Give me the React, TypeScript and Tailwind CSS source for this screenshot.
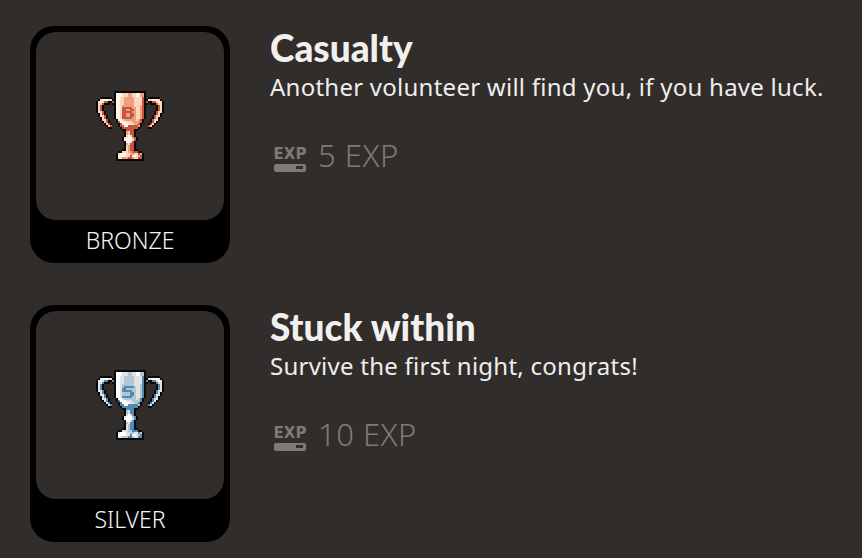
import React from 'react';

interface Achievement {
  tier: string;
  title: string;
  description: string;
  exp: number;
  palette: Record<string, string>;
  letter: string[];
}

const letterB = ['dddddo', 'ddoodd', 'dddddo', 'ddoodd', 'ddoodd', 'dddddo'];
const letterS = ['oddddd', 'ddoooo', 'dddddo', 'oooodd', 'oooodd', 'dddddo'];

const achievements: Achievement[] = [
  {
    tier: 'BRONZE',
    title: 'Casualty',
    description: 'Another volunteer will find you, if you have luck.',
    exp: 5,
    palette: { k: '#0b0908', d: '#c9553f', o: '#ee9f7f', p: '#fbd6ba', w: '#fff6ee' },
    letter: letterB,
  },
  {
    tier: 'SILVER',
    title: 'Stuck within',
    description: 'Survive the first night, congrats!',
    exp: 10,
    palette: { k: '#0b0908', d: '#4e8bb3', o: '#b4c6d2', p: '#dfe3e6', w: '#ffffff' },
    letter: letterS,
  },
];

// left handle, 8 cells wide, mirrored onto the right side
const handle = [
  '........', '........', '........',
  '..kkkkkk', '.kpwwwpp', 'kpwpddkk', 'kppdkkk.', 'kpdk....', 'kpdk....',
  'kpdk....', 'kppdk...', '.kpdk...', '.kppdk..', '..kpdk..', '..kppdk.',
  '...kpdk.', '....kpdk', '.....kpd', '......kk',
];

const body = [
  '.kkkkkkkkkkkkkkkk.',
  '.kwwwpppooppwwook.',
  '.kwwwpppooppwwook.',
  '.kwwppoooooppppdk.',
  'kkwwppoooooppppdkk',
  'dkwwppoooooppppdkd',
  'kkwwppoooooppppdkk',
  '.kwwpoooooopppodk.',
  '.kwwp------oppodk.',
  '.kwwp------oppodk.',
  '.kwwp------oppodk.',
  '.kwwp------oppodk.',
  '.kwwp------oppodk.',
  '.kwwp------oppodk.',
  '..kwwpoooooopodk..',
  '..kdwwwpppoooodk..',
  '...kdwwwwppoodk...',
  '...kddwwdddddok...',
  '....kddddddddk....',
  '.....kkddddkk.....',
  '......kopddk......',
  '......kopddk......',
  '......kpwpdk......',
  '.....kpwwwodk.....',
  '.....kwwwwpdk.....',
  '......kwwpdk......',
  '......kopddk......',
  '......kpoddk......',
  '......kpoddk......',
  '.....kkpoddkk.....',
  '...kkpppoodddkk...',
  '..kpwwwppooppdok..',
  '..kwwwwppdwwpodk..',
  '..kppoooddoppddk..',
  '..kkkkkkkkkkkkkk..',
];

function Trophy({ palette, letter }: { palette: Record<string, string>; letter: string[] }) {
  const cells: React.ReactElement[] = [];
  body.forEach((b, y) => {
    const left = handle[y] ?? '........';
    const mid = y >= 8 && y <= 13 ? b.replace('------', letter[y - 8]) : b;
    const row = left + mid + left.split('').reverse().join('');
    row.split('').forEach((c, x) => {
      if (palette[c]) cells.push(<rect key={`${x}-${y}`} x={x} y={y} width={1} height={1} fill={palette[c]} />);
    });
  });
  return (
    <svg width={68} height={70} viewBox="0 0 34 35" shapeRendering="crispEdges">
      {cells}
    </svg>
  );
}

function ExpIcon() {
  return (
    <div className="w-8 mt-[8px] flex flex-col items-center">
      <span className="font-['DejaVu_Sans'] font-bold text-[15px] leading-[15px] text-[#7d7a77]">EXP</span>
      <div className="w-8 h-2 mt-[2px] bg-[#7d7a77] rounded-[2px] flex justify-end items-center pr-[3px]">
        <div className="w-[7px] h-[3px] bg-[#312d2a]" />
      </div>
    </div>
  );
}

export default function App() {
  return (
    <div className="h-[558px] bg-[#312d2a] pt-[26px] pl-[30px] flex flex-col gap-[42px] font-['Noto_Sans',sans-serif] overflow-hidden">
      {achievements.map(a => (
        <div key={a.tier} className="flex gap-10">
          <div className="w-[200px] h-[237px] bg-black rounded-[24px] p-1.5 flex flex-col">
            <div className="h-[188px] bg-[#312d2a] rounded-[20px] flex items-center justify-center">
              <Trophy palette={a.palette} letter={a.letter} />
            </div>
            <div className="text-center text-[23px] leading-[30px] font-light text-[#f5f5f5] mt-[5px]">{a.tier}</div>
          </div>
          <div>
            <div className="font-['Lato'] font-black text-[37px] leading-[44px] text-[#f2f0ee]">{a.title}</div>
            <div className="text-[24px] leading-[32px] tracking-[0.25px] text-[#eeeeee] mt-[1px]">{a.description}</div>
            <div className="flex items-center gap-3 mt-[32px] ml-1">
              <ExpIcon />
              <span className="text-[31px] leading-[40px] font-light tracking-[0.5px] text-[#7d7a77]">{a.exp} EXP</span>
            </div>
          </div>
        </div>
      ))}
    </div>
  );
}
